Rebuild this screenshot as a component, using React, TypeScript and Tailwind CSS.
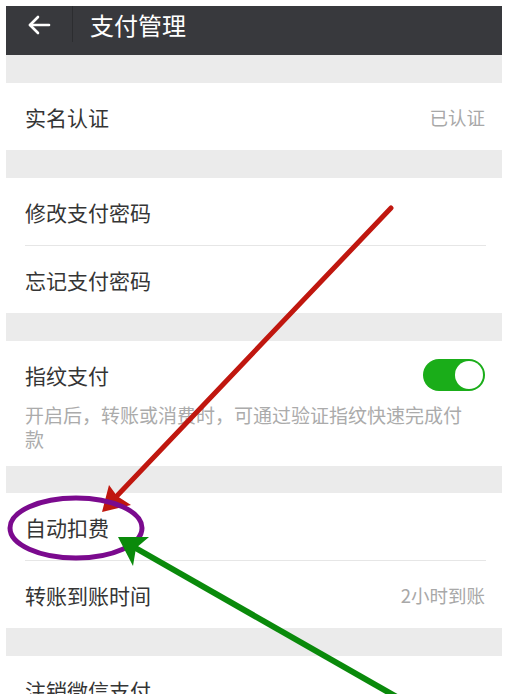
import React from "react";

const font = { fontFamily: '"Noto Sans CJK SC", "Noto Sans", sans-serif' };

function Row({ label, value, divider }: { label: string; value?: string; divider?: boolean }) {
  return (
    <div className="bg-white">
      <div className="flex h-[67px] items-center justify-between pl-[19px] pr-[17px]">
        <span className="text-[21px] leading-[24px] text-[#353535]">{label}</span>
        {value && <span className="text-[18.5px] leading-[24px] text-[#a8a8a8]">{value}</span>}
      </div>
      {divider && <div className="ml-[19px] mr-[16px] h-px bg-[#e6e6e6]" />}
    </div>
  );
}

function Gap({ h = "h-[28px]" }: { h?: string }) {
  return <div className={`${h} bg-[#ebebeb]`} />;
}

export default function App() {
  return (
    <div className="relative h-[694px] w-[508px] overflow-hidden bg-white pl-[6px] pr-[6px] pt-[6px]" style={font}>
      <div className="flex h-[49px] items-center bg-[#38393d] pb-[12px]">
        <div className="flex w-[66px] items-center justify-center">
          <svg width="24" height="20" viewBox="0 0 24 20" fill="none" stroke="white" strokeWidth="2.6" strokeLinecap="round" strokeLinejoin="round">
            <path d="M22 10H3" />
            <path d="M11 2L3 10L11 18" />
          </svg>
        </div>
        <div className="h-[36px] w-px self-start bg-[#2c2d30]" />
        <span className="ml-[17px] text-[24px] leading-[28px] text-white">支付管理</span>
      </div>
      <Gap />
      <Row label="实名认证" value="已认证" />
      <Gap />
      <Row label="修改支付密码" divider />
      <Row label="忘记支付密码" />
      <Gap />
      <div className="bg-white pb-[15px] pl-[19px] pr-[17px] pt-[22px]">
        <div className="flex h-[24px] items-center justify-between">
          <span className="text-[21px] leading-[24px] text-[#353535]">指纹支付</span>
          <div className="flex h-[32px] w-[62px] items-center justify-end rounded-full bg-[#1aad19] pr-[2px]">
            <div className="h-[28px] w-[28px] rounded-full bg-white" />
          </div>
        </div>
        <p className="mt-[16px] w-[450px] text-[19px] leading-[24px] text-[#ababab]">
          开启后，转账或消费时，可通过验证指纹快速完成付款
        </p>
      </div>
      <Gap h="h-[27px]" />
      <Row label="自动扣费" divider />
      <Row label="转账到账时间" value="2小时到账" />
      <Gap />
      <Row label="注销微信支付" />

      <svg className="pointer-events-none absolute left-0 top-0" width="508" height="694" viewBox="0 0 508 694">
        <line x1="391" y1="208" x2="114" y2="499" stroke="#c0170f" strokeWidth="5" strokeLinecap="round" />
        <polygon points="102,512 109,485 117,496 131,505" fill="#c0170f" />
        <ellipse cx="76" cy="528" rx="66" ry="30" fill="none" stroke="#7b0a8e" strokeWidth="5" />
        <line x1="402" y1="700" x2="132" y2="546" stroke="#0a8a0b" strokeWidth="6" />
        <polygon points="118,537 149,537 136,548 133,566" fill="#0a8a0b" />
      </svg>
    </div>
  );
}
